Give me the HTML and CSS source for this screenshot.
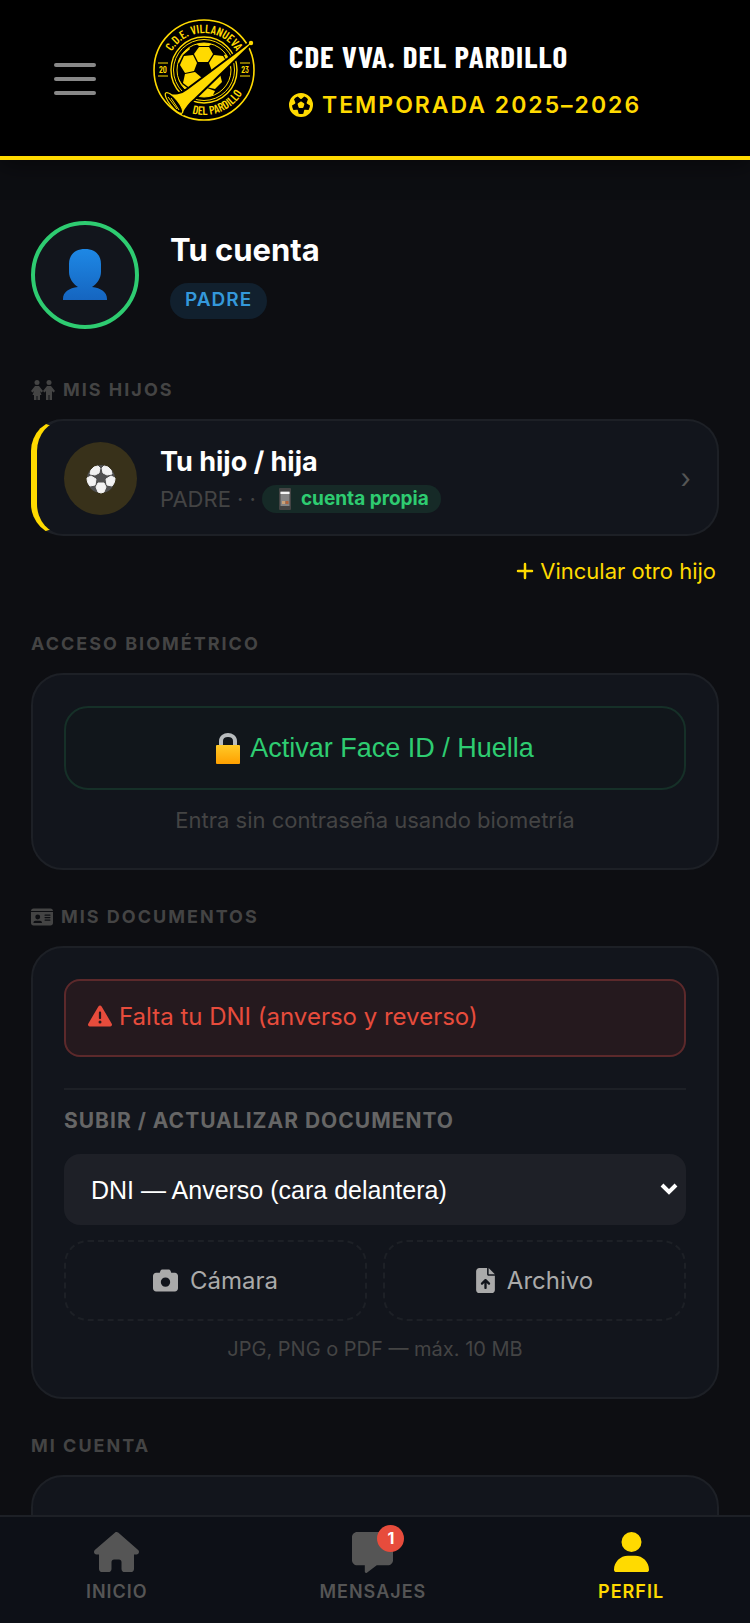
FILE: index.html
```
<!DOCTYPE html>
<html lang="es">

<head>
    <meta charset="UTF-8">
    <meta name="viewport" content="width=device-width, initial-scale=1.0">
    <title>CDE Vva. del Pardillo</title>
    <link rel="stylesheet" href="styles.css">
</head>

<body>
    <header class="header">
        <button class="menu-btn" type="button" aria-label="Menú">
            <span></span>
            <span></span>
            <span></span>
        </button>
        <svg class="logo" viewBox="0 0 104 102" aria-hidden="true">
            <defs>
                <path id="arc-top" d="M15 51 A37 37 0 0 1 89 51" />
                <path id="arc-bottom" d="M7 51 A45 45 0 0 0 97 51" />
                <clipPath id="ball-clip"><circle cx="52" cy="51" r="27" /></clipPath>
            </defs>
            <g fill="none" stroke="#ffda00">
                <circle cx="52" cy="51" r="50" stroke-width="1.6" />
                <circle cx="52" cy="51" r="33" stroke-width="1.4" />
                <circle cx="52" cy="51" r="30.5" stroke-width="1" />
                <circle cx="52" cy="51" r="27" stroke-width="1" />
            </g>
            <!-- ball panels -->
            <g clip-path="url(#ball-clip)" fill="#ffda00">
                <path d="M46 43l-4-8 5-7h10l4 7-5 8z" />
                <path d="M45 44l-3 8-9 2-5-8 4-9 9-1z" />
                <path d="M57 44l5-8 9 1 5 8-7 9-9-2z" />
                <path d="M43 53l7 6-2 9-9 2-8-6 2-9z" />
                <path d="M52 59l7-6 9 2 2 8-7 7-9-2z" />
                <path d="M25 43l3-8 8-8 2 3-7 6-4 8z" />
                <path d="M43 24h18l-4 3H47z" />
                <path d="M72 36l3-1 4 10v5l-3-5z" />
                <path d="M25 57l5 8 8 6-2 4-9-9z" />
                <path d="M44 78l5-8 6-1 8 3-3 6z" />
            </g>
            <!-- bugle laid over the ball -->
            <path d="M98 23l2 2-57 55c-6 5-9 9-12 15L14 74c9 1 15 1 21-4z" fill="#ffda00" stroke="#000" stroke-width="2" />
            <ellipse cx="22" cy="84" rx="13" ry="4" transform="rotate(51 22 84)" fill="#000" stroke="#ffda00" stroke-width="1.2" />
            <path d="M16 78l9 12M19 79l8 12" stroke="#ffda00" stroke-width="1" />
            <circle cx="99" cy="24" r="2.2" fill="#ffda00" />
            <path d="M6 44h10M6 57h10M88 44h10M88 57h10" stroke="#ffda00" stroke-width="1" />
            <g class="logo-text">
                <text class="logo-ring"><textPath href="#arc-top" startOffset="50%">C.D.E. VILLANUEVA</textPath></text>
                <text class="logo-ring"><textPath href="#arc-bottom" startOffset="62%">DEL PARDILLO</textPath></text>
                <text x="11" y="54">20</text>
                <text x="93" y="54">23</text>
            </g>
        </svg>
        <div class="header-text">
            <h1>CDE VVA. DEL PARDILLO</h1>
            <p class="season">
                <svg viewBox="0 0 512 512" fill-rule="evenodd" aria-hidden="true"><path d="M417.3 360.1l-71.6-4.8c-5.2-.3-10.3 1.1-14.5 4.2s-7.2 7.4-8.4 12.5l-17.6 69.6C289.5 445.8 273 448 256 448s-33.5-2.2-49.2-6.4L189.2 372c-1.3-5-4.3-9.4-8.4-12.5s-9.3-4.5-14.5-4.2l-71.6 4.8c-17.6-27.2-28.5-59.2-30.4-93.6L125 228.3c4.4-2.8 7.6-7 9.2-11.9s1.4-10.2-.5-15l-26.7-66.6C128 109.2 155.3 89 186.7 76.9l55.2 46c4 3.3 9 5.1 14.1 5.1s10.2-1.8 14.1-5.1l55.2-46c31.3 12.1 58.7 32.3 79.6 57.9l-26.7 66.6c-1.9 4.8-2.1 10.1-.5 15s4.9 9.1 9.2 11.9l60.7 38.2c-1.9 34.4-12.8 66.4-30.4 93.6zM256 512A256 256 0 1 0 256 0a256 256 0 1 0 0 512zm14.1-325.7c-8.4-6.1-19.8-6.1-28.2 0L194 221c-8.4 6.1-11.9 16.9-8.7 26.8l18.3 56.3c3.2 9.9 12.4 16.6 22.8 16.6h59.2c10.4 0 19.6-6.7 22.8-16.6l18.3-56.3c3.2-9.9-.3-20.7-8.7-26.8l-47.9-34.8z" /></svg>
                TEMPORADA 2025–2026
            </p>
        </div>
    </header>

    <main class="main">
        <section class="profile">
            <div class="avatar">
                <svg width="44" height="52" viewBox="0 0 44 52" aria-hidden="true">
                    <defs>
                        <linearGradient id="bust" x1="0" y1="0" x2="0" y2="1">
                            <stop offset="0" stop-color="#1e88e5" />
                            <stop offset="1" stop-color="#1565c0" />
                        </linearGradient>
                    </defs>
                    <path d="M22 0C32 0 38 6 38 15v8c0 6-4 12-9 15 9 1 15 5 15 12v1H0v-1c0-7 6-11 15-12-5-3-9-9-9-15v-8C6 6 12 0 22 0z" fill="url(#bust)" />
                </svg>
            </div>
            <div class="profile-info">
                <h2 class="profile-name">Tu cuenta</h2>
                <span class="role">PADRE</span>
            </div>
        </section>

        <h3 class="section-title">
            <svg width="24" height="20" viewBox="0 0 24 20" aria-hidden="true">
                <circle cx="6" cy="2.500" r="2.500" />
                <circle cx="18" cy="2.500" r="2.500" />
                <path d="M4 6h4l4 5-1.500 1.500L9 11l1.500 4H9v5H6.500v-4h-1v4H3v-5H1.500L3 11l-1.500 1.500L0 11z" />
                <path d="M16 6h4l4 5-1.500 1.500L21 11v9h-2.500v-5h-1v5H15v-9l-1.500 1.500L12 11z" />
            </svg>
            MIS HIJOS
        </h3>
        <a class="child" href="#">
            <span class="child-icon">
                <svg width="30" height="30" viewBox="0 0 30 30" aria-hidden="true">
                    <circle cx="15" cy="15" r="14" fill="#505050" />
                    <g fill="#f2f2f2" stroke="#f2f2f2" stroke-width="1" stroke-linejoin="round">
                        <path d="M5 6l3-3 4-1 2 2-1 5-4 2-5-1z" />
                        <path d="M25 6l-3-3-4-1-2 2 1 5 4 2 5-1z" />
                        <path d="M1 14l4-2 5 3-1 6-5 1c-2-2-3-5-3-8z" />
                        <path d="M29 14l-4-2-5 3 1 6 5 1c2-2 3-5 3-8z" />
                        <path d="M12 19h6l2 4-2 5-3 1-3-1-2-5z" />
                    </g>
                </svg>
            </span>
            <span class="child-info">
                <span class="child-name">Tu hijo / hija</span>
                <span class="child-meta">PADRE · ·
                    <span class="own-account">
                        <svg width="12" height="22" viewBox="0 0 12 22" aria-hidden="true">
                            <rect width="12" height="22" rx="1" fill="#444" />
                            <rect x="1.500" y="3" width="9" height="15" fill="#858585" />
                            <rect x="1.500" y="4" width="9" height="2" fill="#f5f5f5" />
                            <rect x="3" y="13" width="3" height="3" fill="#c9a27a" />
                            <rect x="6.500" y="13" width="3" height="3" fill="#b0643c" />
                        </svg>
                        cuenta propia
                    </span>
                </span>
            </span>
            <span class="chevron">›</span>
        </a>
        <a class="link-child" href="#">
            <svg width="18" height="18" viewBox="0 0 18 18" aria-hidden="true"><path d="M9 2v14M2 9h14" /></svg>
            Vincular otro hijo
        </a>

        <h3 class="section-title">ACCESO BIOMÉTRICO</h3>
        <section class="card">
            <button class="bio-btn" type="button">
                <svg width="24" height="32" viewBox="0 0 24 32" aria-hidden="true">
                    <defs>
                        <linearGradient id="lock" x1="0" y1="0" x2="0" y2="1">
                            <stop offset="0" stop-color="#ffca28" />
                            <stop offset="1" stop-color="#ffa000" />
                        </linearGradient>
                    </defs>
                    <path d="M5 14V9c0-8 14-8 14 0v5" fill="none" stroke="#b8bcbe" stroke-width="4" />
                    <rect y="13" width="24" height="19" rx="1" fill="url(#lock)" />
                </svg>
                Activar Face ID / Huella
            </button>
            <p class="hint">Entra sin contraseña usando biometría</p>
        </section>

        <h3 class="section-title">
            <svg width="22" height="20" viewBox="0 0 576 512" fill-rule="evenodd" aria-hidden="true"><path d="M0 96l576 0c0-35.300-28.700-64-64-64H64C28.700 32 0 60.700 0 96zm0 32V416c0 35.300 28.700 64 64 64H512c35.300 0 64-28.700 64-64V128H0zM64 405.300c0-29.500 23.900-53.300 53.300-53.300H234.700c29.500 0 53.300 23.900 53.300 53.300c0 5.900-4.800 10.700-10.700 10.700H74.700c-5.900 0-10.700-4.800-10.700-10.700zM176 192a64 64 0 1 1 0 128 64 64 0 1 1 0-128zm176 16c0-8.800 7.200-16 16-16H496c8.800 0 16 7.200 16 16s-7.200 16-16 16H368c-8.800 0-16-7.200-16-16zm0 64c0-8.800 7.200-16 16-16H496c8.800 0 16 7.200 16 16s-7.200 16-16 16H368c-8.800 0-16-7.200-16-16zm0 64c0-8.800 7.200-16 16-16H496c8.800 0 16 7.200 16 16s-7.200 16-16 16H368c-8.800 0-16-7.200-16-16z" /></svg>
            MIS DOCUMENTOS
        </h3>
        <section class="card">
            <div class="alert">
                <svg width="24" height="24" viewBox="0 0 512 512" fill-rule="evenodd" aria-hidden="true"><path d="M256 32c14.200 0 27.300 7.500 34.500 19.800l216 368c7.300 12.400 7.300 27.700 .2 40.100S486.300 480 472 480H40c-14.300 0-27.600-7.700-34.700-20.100s-7-27.800 .2-40.100l216-368C228.700 39.500 241.800 32 256 32zm0 128c-13.300 0-24 10.700-24 24V296c0 13.300 10.700 24 24 24s24-10.700 24-24V184c0-13.300-10.700-24-24-24zm32 224a32 32 0 1 0 -64 0 32 32 0 1 0 64 0z" /></svg>
                Falta tu DNI (anverso y reverso)
            </div>
            <form class="upload">
                <label class="upload-label" for="doc-type">SUBIR / ACTUALIZAR DOCUMENTO</label>
                <div class="select-wrap">
                    <select id="doc-type" name="doc-type">
                        <option>DNI — Anverso (cara delantera)</option>
                        <option>DNI — Reverso (cara trasera)</option>
                    </select>
                    <svg width="18" height="14" viewBox="0 0 18 14" aria-hidden="true"><path d="M2 2l7 7 7-7" /></svg>
                </div>
                <div class="upload-buttons">
                    <button class="upload-btn" type="button">
                        <svg width="25" height="25" viewBox="0 0 512 512" fill-rule="evenodd" aria-hidden="true"><path d="M149.100 64.800L138.700 96H64C28.700 96 0 124.700 0 160V416c0 35.300 28.700 64 64 64H448c35.300 0 64-28.700 64-64V160c0-35.300-28.700-64-64-64H373.300L362.900 64.800C356.400 45.200 338.100 32 317.400 32H194.600c-20.700 0-39 13.200-45.500 32.800zM256 192a96 96 0 1 1 0 192 96 96 0 1 1 0-192z" /></svg>
                        Cámara
                    </button>
                    <button class="upload-btn" type="button">
                        <svg width="19" height="25" viewBox="0 0 384 512" fill-rule="evenodd" aria-hidden="true"><path d="M64 0C28.700 0 0 28.700 0 64V448c0 35.300 28.700 64 64 64H320c35.300 0 64-28.700 64-64V160H256c-17.700 0-32-14.300-32-32V0H64zM256 0V128H384L256 0zM216 408c0 13.300-10.700 24-24 24s-24-10.700-24-24V305.900l-31 31c-9.400 9.400-24.600 9.400-33.900 0s-9.400-24.600 0-33.900l72-72c9.400-9.400 24.600-9.400 33.900 0l72 72c9.400 9.400 9.400 24.600 0 33.900s-24.600 9.400-33.900 0l-31-31V408z" /></svg>
                        Archivo
                    </button>
                </div>
                <p class="hint hint-small">JPG, PNG o PDF — máx. 10 MB</p>
            </form>
        </section>

        <h3 class="section-title">MI CUENTA</h3>
        <section class="card account"></section>
    </main>

    <nav class="bottom-nav">
        <a class="nav-item" href="#">
            <svg width="45" height="40" viewBox="0 0 576 512" aria-hidden="true"><path d="M575.800 255.500c0 18-15 32.100-32 32.100h-32l.7 160.200c0 2.700-.2 5.400-.5 8.100V472c0 22.100-17.900 40-40 40H456c-1.100 0-2.200 0-3.300-.1c-1.400 .1-2.800 .1-4.200 .1H416 392c-22.100 0-40-17.900-40-40V448 384c0-17.700-14.300-32-32-32H256c-17.700 0-32 14.300-32 32v64 24c0 22.100-17.900 40-40 40H160 128.100c-1.500 0-3-.1-4.500-.2c-1.200 .1-2.400 .2-3.600 .2H104c-22.100 0-40-17.900-40-40V360c0-.9 0-1.900 .1-2.800V287.600H32c-18 0-32-14-32-32.100c0-9 3-17 10-24L266.400 8c7-7 15-8 22-8s15 2 21 7L564.800 231.500c8 7 12 15 11 24z" /></svg>
            INICIO
        </a>
        <a class="nav-item" href="#">
            <span class="nav-icon">
                <svg width="41" height="41" viewBox="0 0 512 512" aria-hidden="true"><path d="M64 0C28.700 0 0 28.700 0 64V352c0 35.300 28.700 64 64 64h96v80c0 6.100 3.400 11.600 8.800 14.300s11.900 2.100 16.800-1.500L309.300 416H448c35.300 0 64-28.700 64-64V64c0-35.300-28.700-64-64-64H64z" /></svg>
                <span class="badge">1</span>
            </span>
            MENSAJES
        </a>
        <a class="nav-item active" href="#">
            <svg width="35" height="40" viewBox="0 0 448 512" aria-hidden="true"><path d="M224 256A128 128 0 1 0 224 0a128 128 0 1 0 0 256zm-45.700 48C79.800 304 0 383.800 0 482.300C0 498.700 13.300 512 29.700 512H418.300c16.400 0 29.700-13.300 29.700-29.700C448 383.800 368.200 304 269.700 304H178.300z" /></svg>
            PERFIL
        </a>
    </nav>
</body>

</html>
```

FILE: styles.css
```
* {
    box-sizing: border-box;
    margin: 0;
    padding: 0;
}

body {
    display: flex;
    flex-direction: column;
    height: 100vh;
    background-color: #0d0e12;
    color: #fff;
    font-family: Inter, sans-serif;
    font-size: 22px;
}

a {
    color: inherit;
    text-decoration: none;
}

button {
    cursor: pointer;
}

svg {
    flex-shrink: 0;
    fill: currentColor;
}

/* Header */
.header {
    display: flex;
    align-items: center;
    flex-shrink: 0;
    height: 160px;
    padding: 19px 32px 17px;
    background-color: #000;
    border-bottom: 4px solid #ffda00;
    box-shadow: 0 4px 24px rgba(0, 0, 0, 0.5);
    position: relative;
}

.menu-btn {
    display: flex;
    flex-direction: column;
    gap: 10px;
    padding: 22px;
    background: none;
    border: none;
}

.menu-btn span {
    width: 42px;
    height: 4px;
    background-color: #888;
    border-radius: 2px;
}

.logo {
    align-self: flex-start;
    width: 104px;
    height: 102px;
    margin: 0 33px 0 34px;
}

.logo-text {
    font-family: "Barlow Condensed", "Liberation Sans Narrow", Roboto, sans-serif;
    font-size: 9px;
    font-weight: 600;
    text-anchor: middle;
    fill: #ffda00;
}

.logo-ring {
    font-size: 12px;
}

h1 {
    font-family: "Barlow Condensed", "Liberation Sans Narrow", Roboto, sans-serif;
    font-size: 31px;
    font-weight: 700;
    line-height: 36px;
    letter-spacing: 1px;
}

.season {
    display: flex;
    align-items: center;
    gap: 9px;
    margin-top: 16px;
    color: #ffda00;
    font-size: 23px;
    font-weight: 600;
    line-height: 30px;
    letter-spacing: 2px;
}

.season svg {
    width: 24px;
    height: 24px;
}

/* Content */
.main {
    flex: 1;
    min-height: 0;
    padding: 61px 31px 40px;
    overflow-y: auto;
    scrollbar-width: none;
}

.profile {
    display: flex;
    align-items: center;
    gap: 31px;
    margin-bottom: 49px;
}

.avatar {
    display: flex;
    align-items: center;
    justify-content: center;
    width: 108px;
    height: 108px;
    background-color: #12151c;
    border: 4px solid #2ecc71;
    border-radius: 50%;
}

.profile-name {
    margin-bottom: 14px;
    font-size: 31px;
    line-height: 38px;
}

.role {
    display: block;
    width: fit-content;
    padding: 0 15px 2px;
    background-color: #11202e;
    border-radius: 19px;
    color: #3498db;
    font-size: 19px;
    font-weight: 600;
    line-height: 34px;
    letter-spacing: 1px;
}

.section-title {
    display: flex;
    align-items: center;
    gap: 8px;
    margin: 35px 0 17px;
    color: #444;
    font-size: 18px;
    font-weight: 700;
    line-height: 24px;
    letter-spacing: 2px;
}

.child {
    display: flex;
    align-items: center;
    gap: 23px;
    padding: 20px 26px 18px 27px;
    background-color: #12151c;
    border: 2px solid #1d2026;
    border-left: 6px solid #ffda00;
    border-radius: 32px;
}

.child-icon {
    display: flex;
    align-items: center;
    justify-content: center;
    width: 73px;
    height: 73px;
    background-color: #38311a;
    border-radius: 50%;
}

.child-info {
    flex: 1;
}

.child-name {
    display: block;
    font-size: 27px;
    font-weight: 700;
    line-height: 41px;
}

.child-meta {
    display: flex;
    align-items: center;
    gap: 6px;
    color: #444;
    line-height: 34px;
}

.own-account {
    display: flex;
    align-items: center;
    gap: 10px;
    padding: 0 12px 0 17px;
    background-color: #162a27;
    border-radius: 14px;
    color: #2ecc71;
    font-size: 19px;
    font-weight: 700;
    line-height: 28px;
}

.chevron {
    color: #555;
    font-size: 27px;
}

.link-child {
    display: flex;
    align-items: center;
    gap: 6px;
    width: fit-content;
    margin: 21px 0 47px auto;
    padding-right: 3px;
    color: #ffda00;
    line-height: 28px;
}

.link-child path {
    fill: none;
    stroke: currentColor;
    stroke-width: 2.5;
    stroke-linecap: round;
}

.card {
    padding: 31px;
    background-color: #12151c;
    border: 2px solid #1d2026;
    border-radius: 32px;
}

.account {
    height: 200px;
}

.bio-btn {
    display: flex;
    align-items: center;
    justify-content: center;
    gap: 10px;
    width: 100%;
    height: 84px;
    background-color: #11161b;
    border: 2px solid #163028;
    border-radius: 24px;
    color: #2ecc71;
    font-family: "Liberation Sans", Arial, sans-serif;
    font-size: 27px;
}

.hint {
    margin-top: 14px;
    color: #444;
    line-height: 33px;
    text-align: center;
}

.hint-small {
    margin-top: 12px;
    font-size: 20px;
}

.alert {
    display: flex;
    align-items: center;
    gap: 7px;
    height: 78px;
    padding: 0 22px 4px;
    background-color: #25191e;
    border: 2px solid #5c292b;
    border-radius: 16px;
    color: #e74c3c;
    font-size: 24px;
}

.upload {
    margin-top: 31px;
    padding-top: 14px;
    border-top: 2px solid #1d2026;
}

.upload-label {
    display: block;
    margin-bottom: 16px;
    color: #666;
    font-size: 21px;
    font-weight: 700;
    line-height: 34px;
    letter-spacing: 1px;
}

.select-wrap {
    display: grid;
    align-items: center;
}

.select-wrap select,
.select-wrap svg {
    grid-area: 1 / 1;
}

.select-wrap select {
    width: 100%;
    height: 71px;
    padding: 0 27px;
    appearance: none;
    background-color: #1e2027;
    border: none;
    border-radius: 16px;
    color: #fff;
    font-family: "Liberation Sans", Arial, sans-serif;
    font-size: 25px;
}

.select-wrap svg {
    justify-self: end;
    margin-right: 8px;
    pointer-events: none;
}

.select-wrap path {
    fill: none;
    stroke: #fff;
    stroke-width: 4;
}

.upload-buttons {
    display: flex;
    gap: 16px;
    margin-top: 15px;
}

.upload-btn {
    display: flex;
    flex: 1;
    align-items: center;
    justify-content: center;
    gap: 12px;
    height: 81px;
    background: none;
    border: 2px dashed #1d2026;
    border-radius: 24px;
    color: #aaa;
    font-family: inherit;
    font-size: 24px;
}

/* Bottom navigation */
.bottom-nav {
    display: flex;
    justify-content: space-around;
    flex-shrink: 0;
    height: 108px;
    padding-top: 15px;
    background-color: #0d1017;
    border-top: 2px solid #1d2026;
}

.nav-item {
    display: flex;
    flex-direction: column;
    align-items: center;
    justify-content: space-between;
    height: 72px;
    color: #555;
    font-size: 18px;
    font-weight: 600;
    line-height: 24px;
    letter-spacing: 1px;
}

.nav-item.active {
    color: #ffda00;
}

.nav-icon {
    position: relative;
    height: 41px;
}

.badge {
    position: absolute;
    top: -7px;
    right: -11px;
    width: 27px;
    height: 27px;
    background-color: #e74c3c;
    border-radius: 50%;
    color: #fff;
    font-size: 16px;
    font-weight: 700;
    line-height: 27px;
    letter-spacing: 0;
    text-align: center;
}
```
